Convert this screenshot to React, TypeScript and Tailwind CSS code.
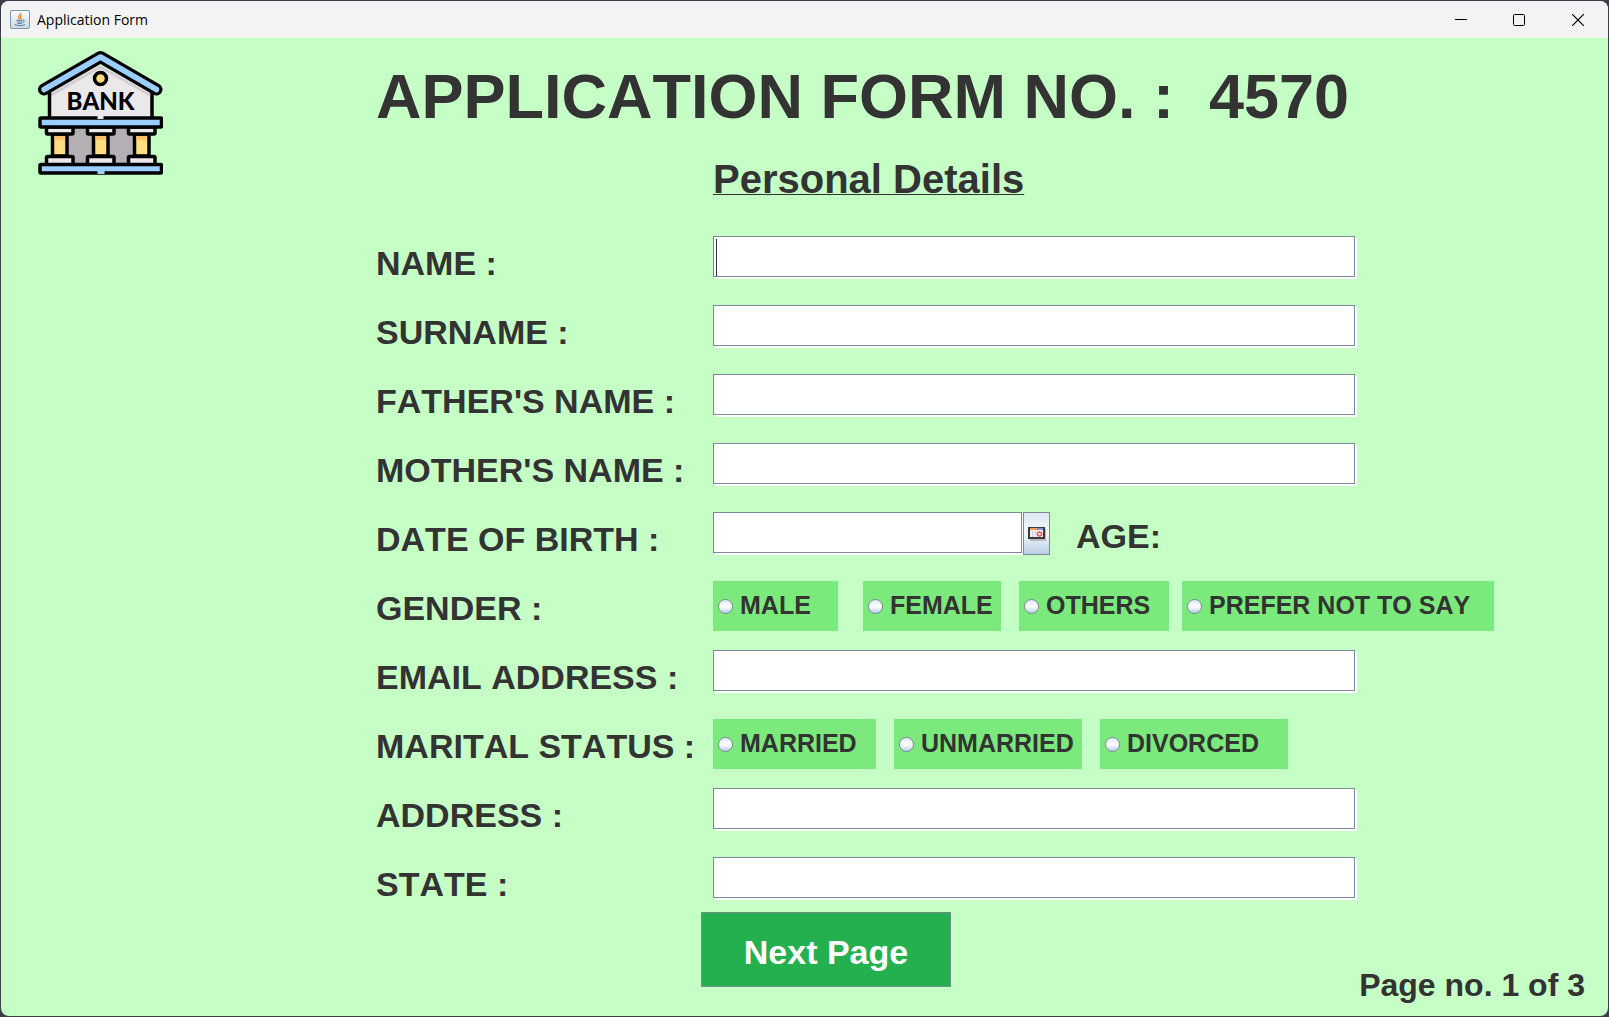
import React from "react";

const inputClass =
  "block h-[41px] min-w-0 rounded-none border border-[#7a8a99] bg-white px-1 text-[25px] text-[#333333] shadow-[2px_2px_0_#ffffff] outline-none";

function JavaIcon() {
  return (
    <svg width="20" height="19" viewBox="0 0 20 19" aria-hidden="true">
      <defs>
        <linearGradient id="java-bg" x1="0" y1="0" x2="0" y2="1">
          <stop offset="0" stopColor="#ffffff" />
          <stop offset="1" stopColor="#c9d6e2" />
        </linearGradient>
      </defs>
      <rect x="0.5" y="0.5" width="19" height="18" rx="1.5" fill="url(#java-bg)" stroke="#7b98b3" />
      <path d="M10.5 3c.8 1.800-3 2.600-1.800 4.800.3.700.9 1 .6 1.700M11.800 5.200c-1.200.7-1.800 1.200-1 2.400.5.700.2 1.200-.4 1.600" fill="none" stroke="#e8823a" strokeWidth="1.300" />
      <path d="M6.300 10.300h6.600M6.800 12h5.600M7.500 13.500h4.200" stroke="#5b7fa3" strokeWidth="1" fill="none" />
      <path d="M13 10.300c2-.5 2 1.600-.2 2.200M4.500 14.500c2.500 1.400 8.500 1.400 10.500 0" stroke="#5b7fa3" strokeWidth="1" fill="none" />
    </svg>
  );
}

function BankLogo() {
  return (
    <svg className="block h-[125px] w-[125px]" viewBox="0 0 125 125" role="img" aria-label="Bank">
      <path d="M11 41 62 15l52 26v26H11Z" fill="#ebe8eb" />
      <path d="M13 45 62.500 17 112 45" fill="none" stroke="#d2ced3" strokeWidth="3" />
      <path d="M11.500 42v25M114 42v25" stroke="#000" strokeWidth="3.500" />
      <path d="M6 39.500 62.500 7 118.500 39.500" fill="none" stroke="#000" strokeWidth="12" strokeLinecap="round" strokeLinejoin="round" />
      <path d="M6 39.500 62.500 7 118.500 39.500" fill="none" stroke="#99ceff" strokeWidth="5.500" strokeLinecap="round" strokeLinejoin="round" />
      <circle cx="62.500" cy="28.500" r="6" fill="#ffd97a" stroke="#000" strokeWidth="3.500" />
      <text x="62.500" y="59.500" textAnchor="middle" fontFamily="Lato, sans-serif" fontWeight="900" fontSize="24" fill="#000">
        BANK
      </text>
      <rect x="30" y="78" width="65" height="36" fill="#b4afb5" />
      {[0, 41, 82].map((x) => (
        <g key={x} transform={`translate(${x} 0)`}>
          <rect x="14.500" y="84" width="14.500" height="22" fill="#ffdd80" stroke="#000" strokeWidth="3.500" />
          <rect x="16.500" y="86" width="10.500" height="4" fill="#ffc06b" />
          <rect x="8.500" y="77" width="26.500" height="7" rx="1" fill="#ebe8eb" stroke="#000" strokeWidth="3.500" />
          <rect x="8.500" y="106.500" width="26.500" height="9" rx="1" fill="#ebe8eb" stroke="#000" strokeWidth="3.500" />
        </g>
      ))}
      <rect x="2" y="68" width="121.500" height="9" rx="1" fill="#99ceff" stroke="#000" strokeWidth="3.500" />
      <rect x="2" y="114.500" width="121.500" height="8.500" rx="1" fill="#99ceff" stroke="#000" strokeWidth="3.500" />
      <path d="M59.500 66h6v3h-6z" fill="#ebe8eb" />
      <path d="M59.500 121h7v3h-7z" fill="#99ceff" />
    </svg>
  );
}

function CalendarIcon() {
  return (
    <svg width="18" height="14" viewBox="0 0 18 14" aria-hidden="true">
      <path d="M1 2h17v12H2z" fill="#b3bcc6" />
      <rect x="0" y="0" width="17" height="12" fill="#3a3a3a" />
      <rect x="2" y="1" width="7" height="2" fill="#f0a050" />
      <rect x="9" y="1" width="6" height="2" fill="#7f93d8" />
      <rect x="2" y="3" width="13" height="7" fill="#f4f4f4" />
      <path d="M4.500 4v6M7.500 4v6" stroke="#cfcfcf" />
      <circle cx="11.500" cy="7" r="2" fill="#ffffff" stroke="#e85050" strokeWidth="1.500" />
    </svg>
  );
}

function Row({ label, htmlFor, children }: { label: string; htmlFor?: string; children: React.ReactNode }) {
  const cls = "w-[337px] shrink-0 whitespace-nowrap text-[34px] leading-[54px]";
  return (
    <div className="flex h-[69px] items-start">
      {htmlFor ? (
        <label htmlFor={htmlFor} className={cls}>
          {label}
        </label>
      ) : (
        <span className={cls}>{label}</span>
      )}
      {children}
    </div>
  );
}

function TextRow({ label, id, caret }: { label: string; id: string; caret?: boolean }) {
  return (
    <Row label={label} htmlFor={id}>
      <div className="relative max-w-[642px] flex-1">
        <input id={id} name={id} type="text" className={`${inputClass} w-full`} />
        {caret && <span className="absolute top-[3px] bottom-px left-[3px] w-px bg-[#333333]" />}
      </div>
    </Row>
  );
}

function Option({ group, label, className }: { group: string; label: string; className: string }) {
  return (
    <label className={`flex h-[50px] items-center gap-[7px] bg-[#7be97b] pl-[5px] text-[25px] whitespace-nowrap ${className}`}>
      <input
        type="radio"
        name={group}
        value={label}
        className="size-[15px] shrink-0 appearance-none rounded-full border border-[#7a8a99] bg-linear-to-b from-[#dde8f3] via-white to-[#b8cfe5] checked:border-4 checked:border-[#333333]"
      />
      {label}
    </label>
  );
}

export default function App() {
  return (
    <div className="flex min-h-screen flex-col bg-[#3b3d49] p-px font-['Liberation_Sans',Arial,sans-serif] [font-kerning:none]">
      <div className="flex flex-1 flex-col overflow-hidden rounded-[8px] bg-[#c5ffc5]">
        <header className="flex h-[37px] shrink-0 items-center bg-[#f3f3f3] pl-[9px] text-black">
          <JavaIcon />
          <span className="ml-[7px] flex-1 font-['Open_Sans','Noto_Sans',sans-serif] text-[14px]">Application Form</span>
          <button type="button" aria-label="Minimize" className="flex h-full w-[58px] items-center justify-center">
            <svg width="12" height="12" viewBox="0 0 12 12">
              <path d="M0 5.500h12" stroke="currentColor" />
            </svg>
          </button>
          <button type="button" aria-label="Maximize" className="flex h-full w-[58px] items-center justify-center">
            <svg width="12" height="12" viewBox="0 0 12 12">
              <rect x="0.500" y="0.500" width="11" height="11" rx="1" fill="none" stroke="currentColor" />
            </svg>
          </button>
          <button type="button" aria-label="Close" className="flex h-full w-[60px] items-center justify-center">
            <svg width="12" height="12" viewBox="0 0 12 12">
              <path d="m0 0 12 12M12 0 0 12" stroke="currentColor" strokeWidth="1.200" />
            </svg>
          </button>
        </header>

        <div className="flex flex-1 font-bold text-[#333333]">
          <aside className="w-[375px] shrink-0 pt-[12px] pl-[37px]">
            <BankLogo />
          </aside>

          <main className="flex flex-1 flex-col pt-[26px]">
            <h1 className="text-[63px] leading-[64px] whitespace-pre">APPLICATION FORM NO. :  4570</h1>
            <h2 className="mt-[31px] ml-[337px] text-[40px] leading-[40px] underline decoration-1 underline-offset-1 [text-decoration-skip-ink:none]">
              Personal Details
            </h2>

            <form className="mt-[37px] flex flex-1 flex-col" onSubmit={(e) => e.preventDefault()}>
              <TextRow label="NAME :" id="name" caret />
              <TextRow label="SURNAME :" id="surname" />
              <TextRow label="FATHER'S NAME :" id="father" />
              <TextRow label="MOTHER'S NAME :" id="mother" />
              <Row label="DATE OF BIRTH :" htmlFor="dob">
                <input id="dob" name="dob" type="text" className={`${inputClass} w-[309px]`} />
                <button
                  type="button"
                  aria-label="Choose date"
                  className="ml-px flex h-[43px] w-[27px] items-center justify-center border border-[#7a8a99] bg-linear-to-b from-[#dde8f3] via-[#f4f8fc] to-[#b8cfe5]"
                >
                  <CalendarIcon />
                </button>
                <span className="ml-[26px] text-[34px] leading-[48px]">AGE:</span>
              </Row>
              <Row label="GENDER :">
                <div role="radiogroup" aria-label="Gender" className="flex">
                  <Option group="gender" label="MALE" className="w-[125px]" />
                  <Option group="gender" label="FEMALE" className="ml-[25px] w-[138px]" />
                  <Option group="gender" label="OTHERS" className="ml-[18px] w-[150px]" />
                  <Option group="gender" label="PREFER NOT TO SAY" className="ml-[13px] w-[312px]" />
                </div>
              </Row>
              <TextRow label="EMAIL ADDRESS :" id="email" />
              <Row label="MARITAL STATUS :">
                <div role="radiogroup" aria-label="Marital status" className="flex gap-[18px]">
                  <Option group="marital" label="MARRIED" className="w-[163px]" />
                  <Option group="marital" label="UNMARRIED" className="w-[188px]" />
                  <Option group="marital" label="DIVORCED" className="w-[188px]" />
                </div>
              </Row>
              <TextRow label="ADDRESS :" id="address" />
              <TextRow label="STATE :" id="state" />
              <div className="-mt-[14px] flex flex-1 items-start justify-between pr-[23px] pl-[325px]">
                <button
                  type="submit"
                  className="h-[75px] w-[250px] border border-[#6f8f8a] bg-[#24b04f] pt-[6px] text-[34px] text-white"
                >
                  Next Page
                </button>
                <span className="self-end pb-[12px] text-[32px] leading-[38px]">Page no. 1 of 3</span>
              </div>
            </form>
          </main>
        </div>
      </div>
    </div>
  );
}
